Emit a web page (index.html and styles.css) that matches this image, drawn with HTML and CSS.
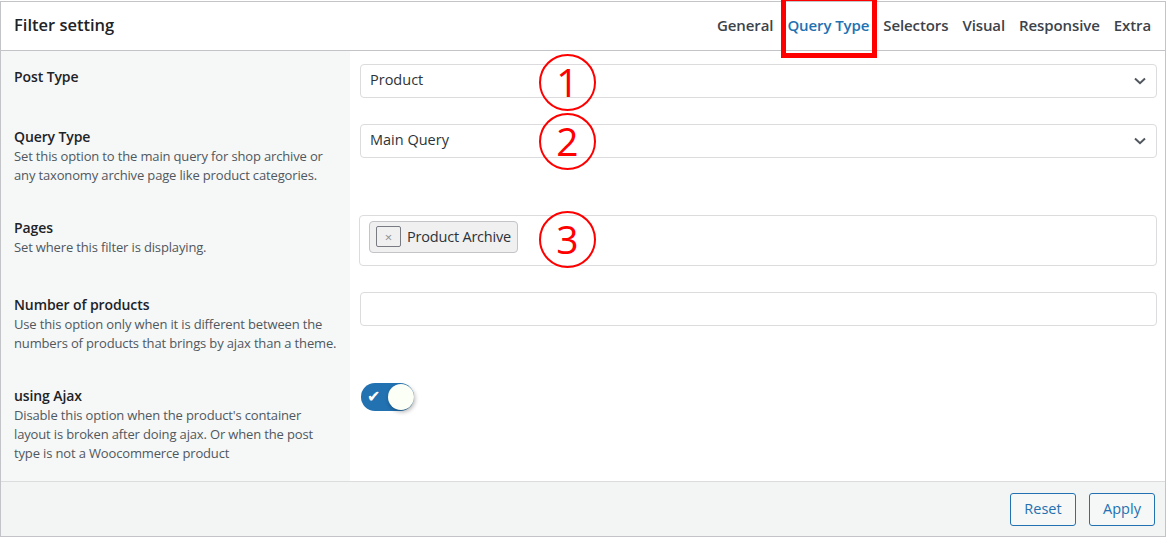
FILE: index.html
```html
<!DOCTYPE html>
<html>
<head>
<meta charset="utf-8">
<link rel="stylesheet" href="styles.css">
</head>
<body>
<div class="panel">
  <div class="header">
    <div class="title">Filter setting</div>
    <nav class="tabs">
      <span class="tab">General</span>
      <span class="tab active">Query Type</span>
      <span class="tab">Selectors</span>
      <span class="tab">Visual</span>
      <span class="tab">Responsive</span>
      <span class="tab">Extra</span>
    </nav>
  </div>
  <div class="body">
    <div class="row">
      <div class="label"><div class="name">Post Type</div></div>
      <div class="field">
        <div class="select">Product<svg class="chev" width="12" height="8" viewBox="0 0 12 8"><path d="M1 1.5 L6 6.2 L11 1.5" fill="none" stroke="#50575e" stroke-width="2"/></svg></div>
      </div>
    </div>
    <div class="row">
      <div class="label"><div class="name">Query Type</div><div class="desc">Set this option to the main query for shop archive or any taxonomy archive page like product categories.</div></div>
      <div class="field">
        <div class="select">Main Query<svg class="chev" width="12" height="8" viewBox="0 0 12 8"><path d="M1 1.5 L6 6.2 L11 1.5" fill="none" stroke="#50575e" stroke-width="2"/></svg></div>
      </div>
    </div>
    <div class="row">
      <div class="label"><div class="name">Pages</div><div class="desc">Set where this filter is displaying.</div></div>
      <div class="field">
        <div class="multi"><span class="tag"><span class="x">×</span>Product Archive</span></div>
      </div>
    </div>
    <div class="row">
      <div class="label"><div class="name">Number of products</div><div class="desc">Use this option only when it is different between the numbers of products that brings by ajax than a theme.</div></div>
      <div class="field">
        <div class="input"></div>
      </div>
    </div>
    <div class="row">
      <div class="label"><div class="name">using Ajax</div><div class="desc">Disable this option when the product's container layout is broken after doing ajax. Or when the post type is not a Woocommerce product</div></div>
      <div class="field">
        <div class="toggle"><span class="check">✔</span><span class="knob"></span></div>
      </div>
    </div>
  </div>
  <div class="footer">
    <button class="btn">Reset</button>
    <button class="btn">Apply</button>
  </div>

  <div class="highlight"></div>
  <div class="mark m1">1</div>
  <div class="mark m2">2</div>
  <div class="mark m3">3</div>
</div>
</body>
</html>
```
FILE: styles.css
```css
* { box-sizing: border-box; }
body {
  margin: 0;
  background: #fff;
  font-family: "Open Sans", "Noto Sans", sans-serif;
  color: #3c434a;
}
.panel {
  position: relative;
  margin-top: 1px;
  width: 1166px;
  height: 536px;
  border: 1px solid #c3c4c7;
  display: flex;
  flex-direction: column;
  background: #fff;
}
.header {
  height: 49px;
  border-bottom: 1px solid #c3c4c7;
  display: flex;
  align-items: center;
  justify-content: space-between;
  padding: 0 14px 3px 13px;
  flex-shrink: 0;
}
.title {
  font-size: 16.5px;
  font-weight: 600;
  color: #1d2327;
}
.tabs {
  display: flex;
  gap: 14px;
}
.tab {
  font-size: 15px;
  font-weight: 600;
  color: #3c434a;
  letter-spacing: -0.1px;
}
.tab.active { color: #2271b1; }
.body {
  flex: 1;
  display: flex;
  flex-direction: column;
  min-height: 0;
}
.row {
  display: grid;
  grid-template-columns: 349px 1fr;
}
.row:last-child { flex: 1; }
.label {
  background: #f6f7f7;
  padding: 16px 11px 17px 13px;
}
.name {
  font-size: 14px;
  font-weight: 600;
  line-height: 19px;
  margin-bottom: 1px;
  color: #1d2327;
  letter-spacing: -0.1px;
}
.desc {
  font-size: 13px;
  line-height: 19px;
  color: #50575e;
  letter-spacing: -0.15px;
}
.field {
  padding: 13px 8px 13px 10px;
}
.select {
  height: 34px;
  border: 1px solid #dcdcde;
  border-radius: 4px;
  display: flex;
  align-items: center;
  justify-content: space-between;
  padding: 0 10px 3px 9px;
  font-size: 14.5px;
  color: #2c3338;
}
.chev { margin-top: 3px; }
.multi {
  height: 51px;
  margin-left: -1px;
  border: 1px solid #dcdcde;
  border-radius: 4px;
  padding: 5px 9px;
}
.tag {
  display: inline-flex;
  align-items: center;
  height: 32px;
  background: #f0f0f1;
  border: 1px solid #c3c4c7;
  border-radius: 4px;
  padding: 0 6px 1px 6px;
  font-size: 14.5px;
  color: #2c3338;
  letter-spacing: -0.2px;
}
.x {
  display: inline-flex;
  align-items: center;
  justify-content: center;
  width: 25px;
  height: 21px;
  border: 1px solid #787c82;
  border-radius: 2px;
  font-size: 13px;
  color: #8c8f94;
  margin-right: 6px;
  letter-spacing: 0;
}
.input {
  height: 34px;
  border: 1px solid #dcdcde;
  border-radius: 4px;
}
.toggle {
  position: relative;
  width: 53px;
  height: 28px;
  margin-left: 1px;
  border-radius: 14px;
  background: #2271b1;
}
.check {
  position: absolute;
  left: 6px;
  top: 4px;
  color: #fff;
  font-size: 16px;
  line-height: 20px;
  font-family: "DejaVu Sans", sans-serif;
}
.knob {
  position: absolute;
  right: 0;
  top: 1px;
  width: 26px;
  height: 26px;
  border-radius: 50%;
  background: #fbfff5;
  box-shadow: 1px 2px 4px rgba(0,0,0,0.3);
}
.footer {
  height: 55px;
  flex-shrink: 0;
  border-top: 1px solid #dcdcde;
  background: #f3f4f4;
  display: flex;
  justify-content: flex-end;
  align-items: center;
  gap: 13px;
  padding: 0 10px 0 0;
}
.btn {
  width: 66px;
  height: 33px;
  border: 1px solid #2271b1;
  border-radius: 3px;
  background: #f6f7f7;
  color: #2271b1;
  font-family: "Open Sans", "Noto Sans", sans-serif;
  font-size: 14.5px;
  padding: 0 0 2px;
}
.highlight {
  position: absolute;
  left: 780px;
  top: -6px;
  width: 96px;
  height: 62px;
  border: 5px solid #ff0000;
}
.mark {
  position: absolute;
  left: 538px;
  width: 57px;
  height: 57px;
  border: 2.5px solid #f00;
  border-radius: 50%;
  color: #f00;
  font-family: "Open Sans", sans-serif;
  font-size: 39px;
  line-height: 52px;
  text-align: center;
}
.m1 { top: 52px; }
.m2 { top: 111px; }
.m3 { top: 209px; }
```
